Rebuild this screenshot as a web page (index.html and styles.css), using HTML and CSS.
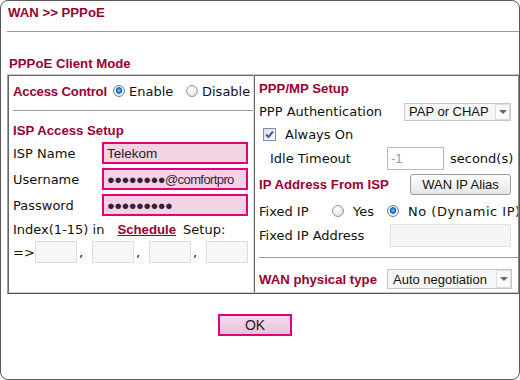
FILE: index.html
```html
<!DOCTYPE html>
<html lang="en">
<head>
    <meta charset="UTF-8">
    <title>WAN &gt;&gt; PPPoE</title>
    <link rel="stylesheet" href="styles.css">
</head>
<body>
    <div class="panel">
        <div class="title">WAN &gt;&gt; PPPoE</div>
        <h2 class="mode">PPPoE Client Mode</h2>

        <div class="setup">
            <div class="cell left">
                <div class="row access">
                    <span class="head ac-head">Access Control</span>
                    <label class="opt first"><input type="radio" name="ac" checked>Enable</label>
                    <label class="opt"><input type="radio" name="ac">Disable</label>
                </div>
                <div class="rule"></div>
                <div class="head sub">ISP Access Setup</div>
                <div class="row field"><span class="lbl">ISP Name</span><input class="pink" type="text" value="Telekom"></div>
                <div class="row field"><span class="lbl">Username</span><input class="pink dots" type="text" value="●●●●●●●●@comfortpro"></div>
                <div class="row field"><span class="lbl">Password</span><input class="pink dots" type="text" value="●●●●●●●●●"></div>
                <div class="row index">Index(1-15) in <a class="link" href="#">Schedule</a> Setup:</div>
                <div class="row slots">
                    <span class="arrow-lbl">=&gt;</span>
                    <input class="slot" type="text"><span class="sep">,</span>
                    <input class="slot" type="text"><span class="sep">,</span>
                    <input class="slot" type="text"><span class="sep">,</span>
                    <input class="slot" type="text">
                </div>
            </div>

            <div class="cell right">
                <div class="row r-head"><span class="head">PPP/MP Setup</span></div>
                <div class="row r-auth">
                    <span>PPP Authentication</span>
                    <span class="select auth">PAP or CHAP<span class="drop"></span></span>
                </div>
                <div class="row r-always">
                    <span class="check">
                        <svg width="9" height="9" viewBox="0 0 9 9"><path d="M1 4.5 L3.5 7 L8 1.5" fill="none" stroke="#4b57a6" stroke-width="2"/></svg>
                    </span>
                    Always On
                </div>
                <div class="row r-idle">
                    <span class="idle-lbl">Idle Timeout</span>
                    <input class="idle" type="text" value="-1" disabled>
                    <span>second(s)</span>
                </div>
                <div class="row r-ip">
                    <span class="head">IP Address From ISP</span>
                    <button class="alias" type="button">WAN IP Alias</button>
                </div>
                <div class="row r-fixed">
                    <span class="fixed-lbl">Fixed IP</span>
                    <label class="opt yes"><input type="radio" name="fx">Yes</label>
                    <label class="opt no"><input type="radio" name="fx" checked>No (Dynamic IP)</label>
                </div>
                <div class="row r-addr">
                    <span>Fixed IP Address</span>
                    <input class="addr" type="text" disabled>
                </div>
                <div class="rule"></div>
                <div class="row r-wan">
                    <span class="head">WAN physical type</span>
                    <span class="select wan">Auto negotiation<span class="drop"></span></span>
                </div>
            </div>
        </div>

        <div class="actions">
            <button class="ok" type="button">OK</button>
        </div>
    </div>
</body>
</html>
```

FILE: styles.css
```css
body {
    margin: 0;
    font-family: "DejaVu Sans", Verdana, sans-serif;
    font-size: 13px;
    color: #111;
    background: #fff;
}
.panel {
    width: 520px;
    height: 380px;
    box-sizing: border-box;
    border: 1px solid #5a5a5a;
    border-radius: 8px;
    overflow: hidden;
}
.title {
    margin-left: 6px;
    padding: 4px 0 0 1px;
    height: 26px;
    border-bottom: 1px solid #999;
    font: bold 13.2px/15px "Liberation Sans", Arial, sans-serif;
    color: #990033;
}
.mode {
    margin: 24px 0 3px 6px;
    padding-left: 2px;
    font: bold 13.2px/15px "Liberation Sans", Arial, sans-serif;
    color: #990033;
}
.setup {
    margin-left: 6px;
    width: 512px;
    height: 220px;
    box-sizing: border-box;
    display: grid;
    grid-template-columns: 246px 1fr;
    border-top: 1px solid #c8c8c8;
    border-left: 1px solid #a0a0a0;
    border-right: 1px solid #888;
    border-bottom: 1px solid #555;
}
.cell {
    border-top: 1px solid #666;
    border-bottom: 1px solid #ccc;
    overflow: hidden;
    white-space: nowrap;
}
.left {
    border-left: 1px solid #666;
    border-right: 1px solid #ddd;
    padding-left: 4px;
}
.right {
    border-left: 1px solid #666;
    padding-left: 4px;
}
.row {
    display: flex;
    align-items: center;
}
.head {
    font: bold 13.2px/15px "Liberation Sans", Arial, sans-serif;
    color: #990033;
}
.rule {
    margin-top: 4px;
    border-top: 1px solid #999;
}

/* left column */
.access {
    height: 30px;
}
.ac-head {
    width: 100px;
    letter-spacing: -0.2px;
}
.opt {
    display: flex;
    align-items: center;
    flex: none;
}
.access .first {
    width: 73px;
}
input[type="radio"] {
    appearance: none;
    width: 12px;
    height: 12px;
    margin: 0 4px 0 0;
    border: 1px solid #9b9b9b;
    border-radius: 50%;
    background: radial-gradient(circle at 40% 35%, #fff 0, #f2f2f2 35%, #d4d4d4 100%);
    box-sizing: border-box;
    flex: none;
}
input[type="radio"]:checked {
    border-color: #66809c;
    background: radial-gradient(circle at 50% 45%, #7fd0ff 0, #1c86d8 25%, #1261a8 40%, #f4f4f4 48%, #e2e2e2 100%);
}
.sub {
    margin-top: 12px;
}
.field {
    height: 26px;
}
.sub + .field {
    margin-top: 2px;
}
.lbl {
    width: 89px;
}
.pink, .slot, .idle, .addr {
    font: 13px "Liberation Sans", Arial, sans-serif;
    box-sizing: border-box;
    outline: none;
}
.pink {
    margin: 0;
    width: 146px;
    height: 22px;
    padding: 0 3px;
    border: 2px solid #e2007a;
    background: #f4d3e4;
    color: #222;
    font-size: 13.5px;
}
.dots {
    color: #3b1d3b;
    font-size: 13px;
    letter-spacing: -0.6px;
}
.index {
    height: 22px;
}
.link {
    margin: 0 7px 0 13px;
    font: bold 13.2px "Liberation Sans", Arial, sans-serif;
    color: #990033;
}
.slots {
    height: 24px;
}
.arrow-lbl {
    width: 22px;
}
.slot {
    margin: 0;
    width: 42px;
    height: 22px;
    border: 1px solid #ddd;
    background: #f7f7f7;
}
.sep {
    width: 15px;
    padding-left: 2px;
    box-sizing: border-box;
}

/* right column */
.r-head {
    height: 24px;
}
.r-auth {
    height: 23px;
}
.select {
    display: flex;
    align-items: center;
    margin-left: auto;
    box-sizing: border-box;
    border: 1px solid #c8c8c8;
    background: #f6f6f6;
    font: 13px "Liberation Sans", Arial, sans-serif;
    color: #111;
    padding-left: 4px;
}
.auth {
    width: 107px;
    height: 18px;
    margin-right: 7px;
}
.wan {
    width: 125px;
    height: 20px;
    margin-right: 6px;
    padding-left: 5px;
}
.drop {
    margin-left: auto;
    width: 15px;
    align-self: stretch;
    box-sizing: border-box;
    border: 1px solid #dcdcdc;
    background: #fafafa;
    position: relative;
}
.drop::after {
    content: "";
    position: absolute;
    left: 3px;
    top: 50%;
    margin-top: -2px;
    border-left: 4px solid transparent;
    border-right: 4px solid transparent;
    border-top: 4px solid #666;
}
.r-always {
    height: 22px;
}
.check {
    width: 13px;
    height: 13px;
    box-sizing: border-box;
    margin: 0 9px 0 4px;
    border: 1px solid #7b8fb0;
    background: linear-gradient(135deg, #dcdcd8, #fff);
    display: flex;
    align-items: center;
    justify-content: center;
}
.r-idle {
    height: 26px;
}
.idle-lbl {
    margin-left: 11px;
    width: 117px;
}
.idle {
    margin: 0 6px 0 0;
    width: 57px;
    height: 23px;
    padding: 0 3px;
    border: 1px solid #a9bdd6;
    background: #fff;
    color: #999;
}
.r-ip {
    height: 27px;
}
.alias {
    margin-left: auto;
    margin-right: 7px;
    width: 101px;
    height: 21px;
    padding: 0;
    border: 1px solid #999;
    border-radius: 3px;
    background: linear-gradient(#fefefe, #e6e6e6);
    font: 13px "Liberation Sans", Arial, sans-serif;
    color: #111;
}
.r-fixed {
    height: 26px;
}
.fixed-lbl {
    width: 73px;
    flex: none;
}
.r-fixed input[type="radio"] {
    margin-right: 9px;
}
.r-fixed .yes {
    width: 55px;
}
.r-fixed .no {
    letter-spacing: 0.5px;
}
.r-addr {
    height: 23px;
}
.addr {
    margin: 0 7px 0 auto;
    width: 121px;
    height: 23px;
    border: 1px solid #e2e2e2;
    background: #f5f5f5;
}
.right .rule {
    margin-top: 10px;
}
.r-wan {
    margin-top: 9px;
    height: 24px;
}

/* bottom */
.actions {
    margin-top: 20px;
    padding-right: 10px;
    text-align: center;
}
.ok {
    width: 74px;
    height: 22px;
    padding: 0;
    border: 2px solid #e2007a;
    background: linear-gradient(#f6dcec, #e7c2d9);
    font: 14px "Liberation Sans", Arial, sans-serif;
    color: #222;
}
```
